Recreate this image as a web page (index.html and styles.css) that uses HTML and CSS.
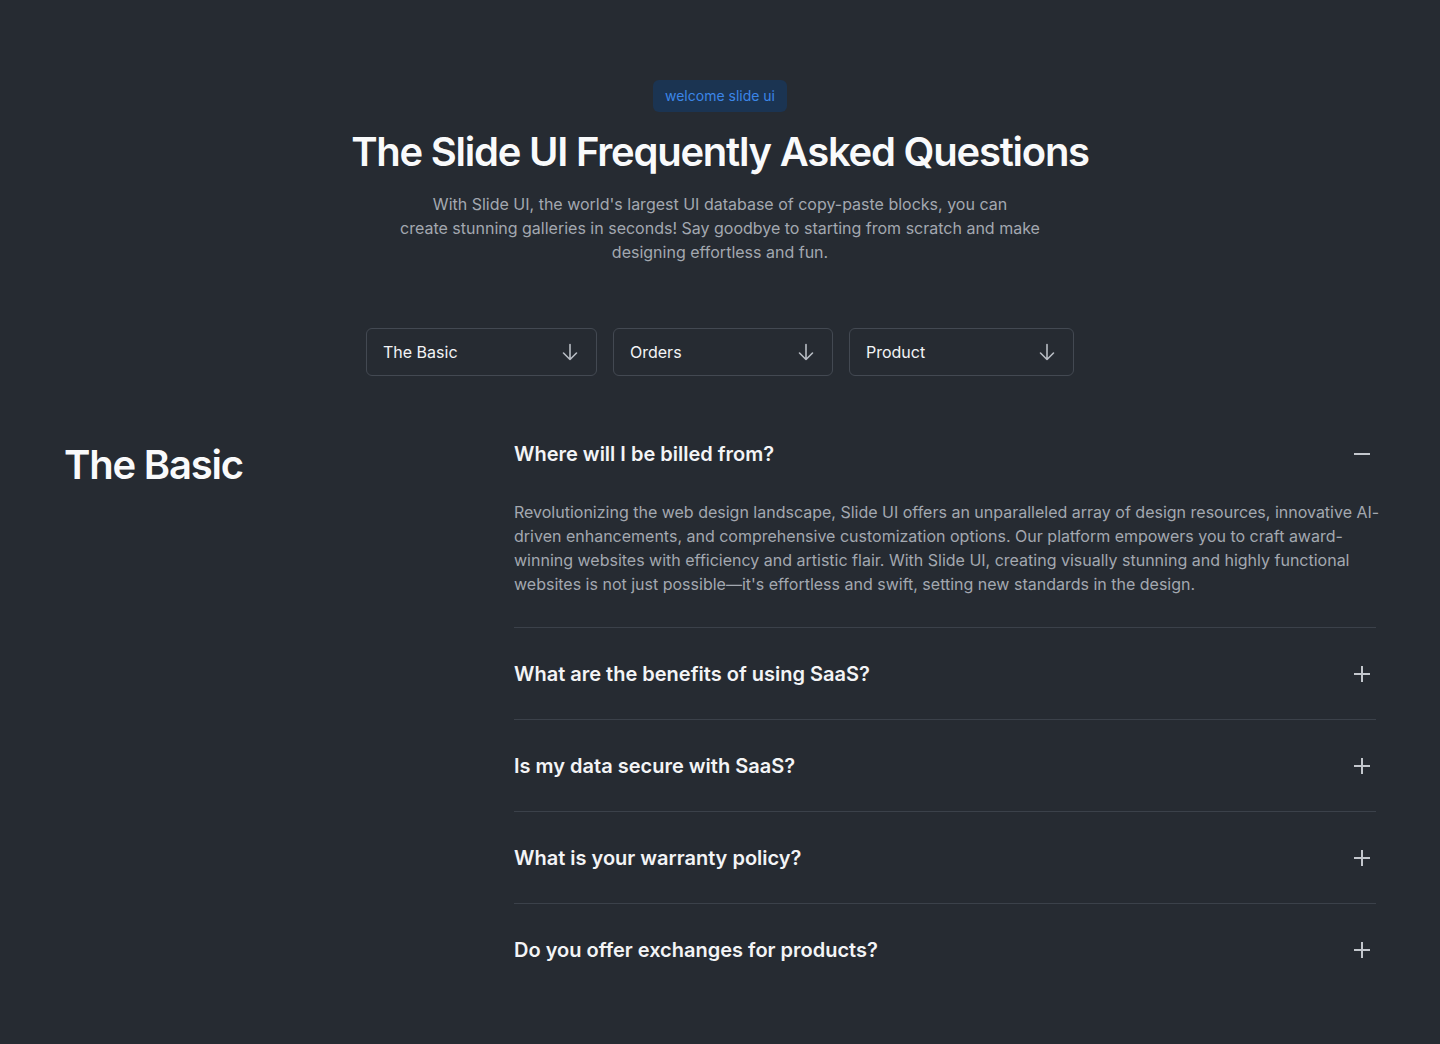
FILE: index.html
```html
<!DOCTYPE html>
<html lang="en">
<head>
<meta charset="utf-8">
<title>Slide UI FAQ</title>
<link rel="stylesheet" href="styles.css">
</head>
<body>
<main class="page">
  <header class="hero">
    <span class="badge">welcome slide ui</span>
    <h1 class="title">The Slide UI Frequently Asked Questions</h1>
    <p class="lead">With Slide UI, the world's largest UI database of copy-paste blocks, you can<br>create stunning galleries in seconds! Say goodbye to starting from scratch and make designing effortless and fun.</p>
  </header>

  <nav class="filters">
    <button class="select select-basic">The Basic
      <svg class="arrow" viewBox="0 0 20 20" width="20" height="20"><path d="M10 2.5v15M3.5 11l6.5 6.5 6.5-6.5" fill="none" stroke="currentColor" stroke-width="1.6" stroke-linecap="round" stroke-linejoin="round"/></svg>
    </button>
    <button class="select select-orders">Orders
      <svg class="arrow" viewBox="0 0 20 20" width="20" height="20"><path d="M10 2.5v15M3.5 11l6.5 6.5 6.5-6.5" fill="none" stroke="currentColor" stroke-width="1.6" stroke-linecap="round" stroke-linejoin="round"/></svg>
    </button>
    <button class="select select-product">Product
      <svg class="arrow" viewBox="0 0 20 20" width="20" height="20"><path d="M10 2.5v15M3.5 11l6.5 6.5 6.5-6.5" fill="none" stroke="currentColor" stroke-width="1.6" stroke-linecap="round" stroke-linejoin="round"/></svg>
    </button>
  </nav>

  <section class="faq">
    <h2 class="faq-heading">The Basic</h2>
    <div class="faq-list">
      <div class="item open">
        <div class="question">
          <span>Where will I be billed from?</span>
          <svg class="toggle" viewBox="0 0 24 24" width="24" height="24"><path d="M4 12h16" fill="none" stroke="currentColor" stroke-width="2"/></svg>
        </div>
        <p class="answer">Revolutionizing the web design landscape, Slide UI offers an unparalleled array of design resources, innovative AI-driven enhancements, and comprehensive customization options. Our platform empowers you to craft award-winning websites with efficiency and artistic flair. With Slide UI, creating visually stunning and highly functional websites is not just possible—it's effortless and swift, setting new standards in the design.</p>
      </div>
      <div class="item">
        <div class="question">
          <span>What are the benefits of using SaaS?</span>
          <svg class="toggle" viewBox="0 0 24 24" width="24" height="24"><path d="M12 4v16M4 12h16" fill="none" stroke="currentColor" stroke-width="2"/></svg>
        </div>
      </div>
      <div class="item">
        <div class="question">
          <span>Is my data secure with SaaS?</span>
          <svg class="toggle" viewBox="0 0 24 24" width="24" height="24"><path d="M12 4v16M4 12h16" fill="none" stroke="currentColor" stroke-width="2"/></svg>
        </div>
      </div>
      <div class="item">
        <div class="question">
          <span>What is your warranty policy?</span>
          <svg class="toggle" viewBox="0 0 24 24" width="24" height="24"><path d="M12 4v16M4 12h16" fill="none" stroke="currentColor" stroke-width="2"/></svg>
        </div>
      </div>
      <div class="item">
        <div class="question">
          <span>Do you offer exchanges for products?</span>
          <svg class="toggle" viewBox="0 0 24 24" width="24" height="24"><path d="M12 4v16M4 12h16" fill="none" stroke="currentColor" stroke-width="2"/></svg>
        </div>
      </div>
    </div>
  </section>
</main>
</body>
</html>
```
FILE: styles.css
```css
* { box-sizing: border-box; }

html, body {
  margin: 0;
  padding: 0;
  background: #262b32;
}

body {
  font-family: "Inter", "Liberation Sans", sans-serif;
  color: #f3f4f6;
  min-height: 1044px;
}

.page {
  padding: 80px 64px 0;
}

.hero {
  display: flex;
  flex-direction: column;
  align-items: center;
  text-align: center;
}

.badge {
  display: inline-block;
  padding: 6px 12px;
  font-size: 14px;
  line-height: 20px;
  color: #3b86e8;
  background: #1b3452;
  border-radius: 6px;
}

.title {
  margin: 16px 0 0;
  font-size: 40px;
  line-height: 48px;
  font-weight: 600;
  letter-spacing: -0.031em;
  color: #f9fafb;
}

.lead {
  margin: 16px 0 0;
  max-width: 660px;
  font-size: 16px;
  line-height: 24px;
  color: #a3a8b0;
}

.filters {
  display: flex;
  justify-content: center;
  gap: 16px;
  margin-top: 64px;
}

.select {
  display: flex;
  align-items: center;
  justify-content: space-between;
  height: 48px;
  padding: 0 16px;
  background: transparent;
  border: 1px solid #434952;
  border-radius: 6px;
  font-family: inherit;
  font-size: 16px;
  color: #f3f4f6;
}

.select-basic { width: 231px; }
.select-orders { width: 220px; }
.select-product { width: 225px; }

.arrow {
  color: #b8bdc4;
}

.faq {
  display: grid;
  grid-template-columns: 450px 1fr;
  margin-top: 32px;
}

.faq-heading {
  margin: 33px 0 0;
  font-size: 40px;
  line-height: 48px;
  font-weight: 600;
  letter-spacing: -0.03em;
  color: #f9fafb;
}

.item {
  padding: 32px 0 31px;
  border-bottom: 1px solid #3b414a;
}

.item:last-child {
  border-bottom: none;
}

.question {
  display: flex;
  align-items: center;
  justify-content: space-between;
  font-size: 20px;
  line-height: 28px;
  font-weight: 600;
  color: #f3f4f6;
}

.toggle {
  margin-right: 2px;
  color: #c3c7cd;
}

.answer {
  margin: 32px -4px 0 0;
  font-size: 16px;
  line-height: 24px;
  color: #a3a8b0;
}
```
